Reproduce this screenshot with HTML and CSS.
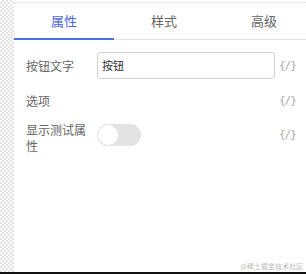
FILE: index.html
```html
<!DOCTYPE html>
<html>
<head>
<meta charset="utf-8">
<link rel="stylesheet" href="styles.css">
</head>
<body>
<div class="page">
  <div class="checker"></div>
  <div class="panel">
    <div class="tabs">
      <div class="tab active">属性</div>
      <div class="tab">样式</div>
      <div class="tab">高级</div>
    </div>
    <div class="form">
      <div class="row">
        <div class="label">按钮文字</div>
        <div class="input">按钮</div>
        <div class="code">{/}</div>
      </div>
      <div class="row">
        <div class="label">选项</div>
        <div class="spacer"></div>
        <div class="code">{/}</div>
      </div>
      <div class="row top">
        <div class="label wrap">显示测试属性</div>
        <div class="field"><div class="toggle"><div class="knob"></div></div></div>
        <div class="code mt">{/}</div>
      </div>
    </div>
  </div>
</div>
<div class="bottom"></div>
<div class="watermark">@稀土掘金技术社区</div>
</body>
</html>
```
FILE: styles.css
```css
html, body { margin: 0; padding: 0; }
body {
  width: 306px;
  height: 274px;
  overflow: hidden;
  position: relative;
  background: #fff;
  font-family: "Noto Sans CJK SC", "Noto Sans", sans-serif;
  font-size: 12px;
  color: #666;
}
.page { display: flex; height: 272px; }
.checker {
  width: 14px;
  flex: none;
  background-color: #fff;
  background-image: conic-gradient(#e2e2e2 25%, #fff 0 50%, #e2e2e2 0 75%, #fff 0);
  background-size: 4px 4px;
}
.panel {
  width: 300px;
  flex: none;
  padding-top: 2px;
  background: #fff;
}
.tabs {
  display: flex;
  border-top: 1px dotted #d8d8d8;
  height: 36px;
  border-bottom: 1px solid #e4e4e4;
}
.tab {
  width: 100px;
  text-align: center;
  line-height: 36px;
  font-size: 13px;
  color: #666;
}
.tab.active {
  color: #5068d8;
  border-bottom: 2px solid #4a6ee0;
  height: 35px;
  margin-bottom: -1px;
}
.form {
  padding: 12px 0 0 12px;
  display: flex;
  flex-direction: column;
  gap: 8px;
}
.row { display: flex; align-items: center; height: 27px; }
.row.top { align-items: flex-start; height: auto; }
.label { width: 71px; flex: none; color: #666; }
.label.wrap { width: 66px; margin-right: 5px; line-height: 16px; }
.input {
  height: 25px;
  border: 1px solid #d2d2d2;
  border-radius: 3px;
  font-size: 11px;
  line-height: 25px;
  padding-left: 4px;
  width: 172px;
  color: #333;
}
.spacer { width: 178px; }
.field { width: 178px; }
.code {
  margin-left: 4px;
  font-family: "DejaVu Sans Mono", monospace;
  font-size: 11px;
  color: #aaa;
  letter-spacing: -1px;
}
.code.mt { margin-top: 2px; line-height: 22px; }
.toggle {
  margin-top: 2px;
  width: 44px;
  height: 22px;
  border-radius: 11px;
  background: #e3e3e3;
  position: relative;
}
.knob {
  position: absolute;
  left: 1px;
  top: 1px;
  width: 20px;
  height: 20px;
  border-radius: 50%;
  background: #fff;
}
.bottom { height: 2px; background: #111; }
.watermark {
  position: absolute;
  right: 3px;
  bottom: 3px;
  font-size: 7px;
  color: #bbb;
  font-family: "Noto Sans CJK SC", sans-serif;
}
```
